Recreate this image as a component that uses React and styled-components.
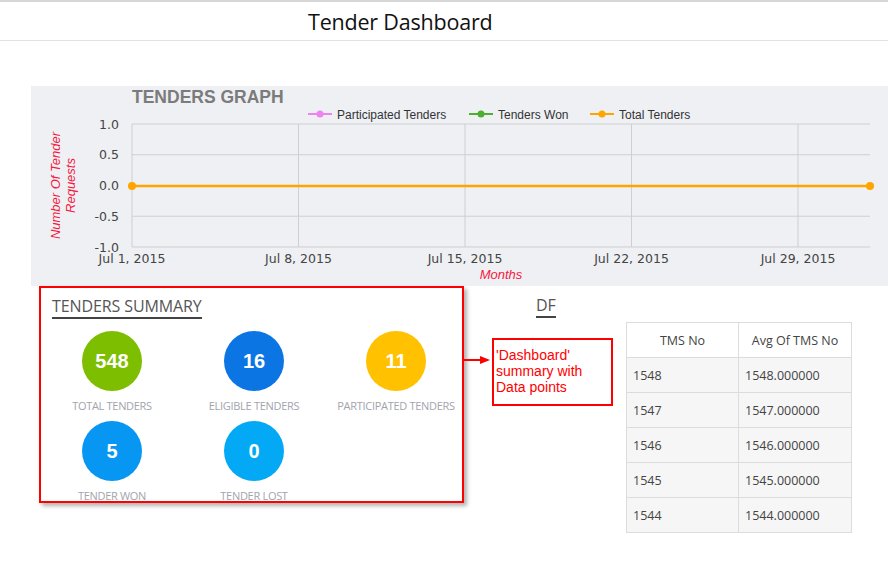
import React from 'react'
import styled, { createGlobalStyle } from 'styled-components'

const GlobalStyle = createGlobalStyle`
  html, body { margin: 0; padding: 0; background: #fff; }
  body { font-family: "Open Sans", "Liberation Sans", sans-serif; }
`

const stats = [
  { value: 548, label: 'TOTAL TENDERS', color: '#7dbe00' },
  { value: 16, label: 'ELIGIBLE TENDERS', color: '#0b76e3' },
  { value: 11, label: 'PARTICIPATED TENDERS', color: '#ffc100' },
  { value: 5, label: 'TENDER WON', color: '#0797f3' },
  { value: 0, label: 'TENDER LOST', color: '#03a9f5' },
]

const rows = [1548, 1547, 1546, 1545, 1544]

const legend = [
  { name: 'Participated Tenders', color: '#ee82ee', x: 277 },
  { name: 'Tenders Won', color: '#4caf30', x: 438 },
  { name: 'Total Tenders', color: '#ffa500', x: 559 },
]

const yTicks = ['1.0', '0.5', '0.0', '-0.5', '-1.0']
const xTicks = ['Jul 1, 2015', 'Jul 8, 2015', 'Jul 15, 2015', 'Jul 22, 2015', 'Jul 29, 2015']

const TendersGraph = () => {
  const left = 101
  const right = 839
  const top = 38
  const bottom = 161
  const step = 166.5
  return (
    <svg width="857" height="200" viewBox="0 0 857 200">
      <text x="101" y="17" fontFamily="Liberation Sans, Arial, sans-serif" fontWeight="bold" fontSize="17.5" fill="#7b7b7b">
        TENDERS GRAPH
      </text>
      {legend.map((l) => (
        <g key={l.name}>
          <line x1={l.x} x2={l.x + 24} y1="28" y2="28" stroke={l.color} strokeWidth="2" />
          <circle cx={l.x + 12} cy="28" r="3.5" fill={l.color} />
          <text x={l.x + 29} y="32.5" fontFamily="Liberation Sans, Arial, sans-serif" fontSize="12" fill="#333">
            {l.name}
          </text>
        </g>
      ))}
      {yTicks.map((t, i) => {
        const y = top + (i * (bottom - top)) / 4
        return (
          <g key={t}>
            <line x1={left} x2={right} y1={y} y2={y} stroke="#cfcfcf" strokeWidth="1" />
            <text x="88" y={y + 4.5} textAnchor="end" fontFamily="DejaVu Sans, Verdana, sans-serif" fontSize="12.5" fill="#444">
              {t}
            </text>
          </g>
        )
      })}
      {xTicks.map((t, i) => {
        const x = left + i * step
        return (
          <g key={t}>
            <line x1={x} x2={x} y1={top} y2={bottom} stroke="#cfcfcf" strokeWidth="1" />
            <text x={x} y="177" textAnchor="middle" fontFamily="DejaVu Sans, Verdana, sans-serif" fontSize="12.5" fill="#444">
              {t}
            </text>
          </g>
        )
      })}
      <line x1={left} x2={right} y1="100" y2="100" stroke="#ffa500" strokeWidth="2.5" />
      <circle cx={left} cy="100" r="4" fill="#ffa500" />
      <circle cx={right} cy="100" r="4" fill="#ffa500" />
      <g transform="translate(32 99.5) rotate(-90)" fontFamily="Liberation Sans, Arial, sans-serif" fontStyle="italic" fontSize="13" fill="#f7163f" textAnchor="middle">
        <text x="0" y="-3">Number Of Tender</text>
        <text x="0" y="12">Requests</text>
      </g>
      <text x="470" y="193" textAnchor="middle" fontFamily="Liberation Sans, Arial, sans-serif" fontStyle="italic" fontSize="13" fill="#f7163f">
        Months
      </text>
    </svg>
  )
}

const App = () => {
  return (
    <Page>
      <GlobalStyle />
      <Header>
        <Title>Tender Dashboard</Title>
      </Header>
      <GraphPanel>
        <TendersGraph />
      </GraphPanel>
      <BottomRow>
        <SummaryBox>
          <SectionHeading>TENDERS SUMMARY</SectionHeading>
          <StatGrid>
            {stats.map((s) => (
              <Stat key={s.label}>
                <Circle color={s.color}>{s.value}</Circle>
                <StatLabel>{s.label}</StatLabel>
              </Stat>
            ))}
          </StatGrid>
        </SummaryBox>
        <RightSide>
          <DfHeading>DF</DfHeading>
          <RightRow>
            <Callout>
              <Arrow>
                <svg width="28" height="10" viewBox="0 0 28 10">
                  <line x1="0" y1="5" x2="20" y2="5" stroke="#ff0000" strokeWidth="2" />
                  <polygon points="16,1 26,5 16,9" fill="#ff0000" />
                </svg>
              </Arrow>
              <Note>
                'Dashboard'
                <br />
                summary with
                <br />
                Data points
              </Note>
            </Callout>
            <Table>
              <thead>
                <tr>
                  <Th>TMS No</Th>
                  <Th>Avg Of TMS No</Th>
                </tr>
              </thead>
              <tbody>
                {rows.map((r) => (
                  <tr key={r}>
                    <Td>{r}</Td>
                    <Td>{r}.000000</Td>
                  </tr>
                ))}
              </tbody>
            </Table>
          </RightRow>
        </RightSide>
      </BottomRow>
    </Page>
  )
}

export default App

const Page = styled.div`
  width: 888px;
  min-height: 577px;
  background: #fff;
`

const Header = styled.div`
  height: 41px;
  border-top: 2px solid #d6d6d6;
  box-sizing: border-box;
  border-bottom: 1px solid #e2e2e2;
  display: flex;
  align-items: center;
  padding-left: 308px;
`

const Title = styled.div`
  font-family: "Open Sans", "Liberation Sans", sans-serif;
  font-size: 21.5px;
  color: #111;
  letter-spacing: -0.2px;
`

const GraphPanel = styled.div`
  margin: 45px 0 0 31px;
  height: 200px;
  background: #eef0f3;
  display: flex;
`

const BottomRow = styled.div`
  display: flex;
  align-items: flex-start;
  padding-left: 39px;
`

const SummaryBox = styled.div`
  width: 425px;
  height: 217px;
  box-sizing: border-box;
  border: 2px solid #ff0000;
  box-shadow: 3px 3px 4px rgba(0, 0, 0, 0.3);
  padding: 7px 0 0 11px;
`

const SectionHeading = styled.div`
  display: inline-block;
  font-family: "Open Sans", "Liberation Sans", sans-serif;
  font-size: 16px;
  line-height: 21px;
  color: #555;
  border-bottom: 2px solid #444;
  letter-spacing: -0.1px;
`

const StatGrid = styled.div`
  display: grid;
  grid-template-columns: repeat(3, 142px);
  row-gap: 9px;
  margin: 12px 0 0 -11px;
`

const Stat = styled.div`
  display: flex;
  flex-direction: column;
  align-items: center;
`

const Circle = styled.div`
  width: 60px;
  height: 60px;
  border-radius: 50%;
  background: ${(p) => p.color};
  color: #fff;
  display: flex;
  align-items: center;
  justify-content: center;
  font-family: "Liberation Sans", Arial, sans-serif;
  font-weight: bold;
  font-size: 20px;
`

const StatLabel = styled.div`
  margin-top: 8px;
  font-family: "Open Sans", "Liberation Sans", sans-serif;
  font-size: 11px;
  line-height: 13px;
  color: #a3a3ad;
  letter-spacing: -0.3px;
  white-space: nowrap;
`

const RightSide = styled.div`
  display: flex;
  flex-direction: column;
`

const DfHeading = styled.div`
  align-self: flex-start;
  margin: 9px 0 0 72px;
  font-family: "Open Sans", "Liberation Sans", sans-serif;
  font-size: 16px;
  line-height: 21px;
  color: #555;
  border-bottom: 2px solid #444;
`

const RightRow = styled.div`
  display: flex;
  align-items: flex-start;
  margin-top: 4px;
`

const Callout = styled.div`
  display: flex;
  align-items: flex-start;
  margin-top: 16px;
`

const Arrow = styled.div`
  width: 28px;
  margin-top: 17px;
  display: flex;
`

const Note = styled.div`
  width: 121px;
  height: 68px;
  box-sizing: border-box;
  border: 2px solid #ff0000;
  padding: 7px 0 0 2px;
  font-family: "Liberation Sans", Arial, sans-serif;
  font-size: 14px;
  line-height: 16px;
  color: #ff0000;
  white-space: nowrap;
`

const Table = styled.table`
  margin-left: 13px;
  border-collapse: collapse;
  font-family: "Open Sans", "Liberation Sans", sans-serif;
  font-size: 12.5px;
  color: #444;
`

const Th = styled.th`
  font-weight: normal;
  height: 35px;
  box-sizing: border-box;
  border: 1px solid #dcdcdc;
  background: #fff;
  text-align: center;
  padding: 0 6px;
  &:first-child { width: 112px; }
  &:last-child { width: 113px; }
`

const Td = styled.td`
  height: 35px;
  box-sizing: border-box;
  border: 1px solid #dcdcdc;
  background: #f6f6f6;
  padding: 0 6px;
`
